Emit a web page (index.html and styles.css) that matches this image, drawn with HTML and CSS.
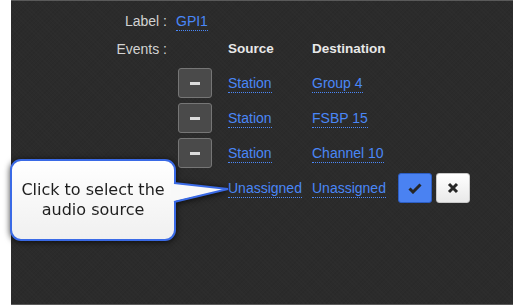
FILE: index.html
```html
<!DOCTYPE html>
<html>
<head>
<meta charset="utf-8">
<link rel="stylesheet" href="styles.css">
</head>
<body>
<div class="page">
  <div class="panel">
    <div class="form">
      <div class="lbl r1">Label :</div>
      <div class="val r1"><a class="link">GPI1</a></div>

      <div class="lbl r2">Events :</div>
      <div class="head src r2">Source</div>
      <div class="head dst r2">Destination</div>

      <div class="btncell"><button class="btn minus"><span class="bar"></span></button></div>
      <div class="cell"><a class="link">Station</a></div>
      <div class="cell"><a class="link">Group 4</a></div>
      <div class="cell"></div>

      <div class="btncell"><button class="btn minus"><span class="bar"></span></button></div>
      <div class="cell"><a class="link">Station</a></div>
      <div class="cell"><a class="link">FSBP 15</a></div>
      <div class="cell"></div>

      <div class="btncell"><button class="btn minus"><span class="bar"></span></button></div>
      <div class="cell"><a class="link">Station</a></div>
      <div class="cell"><a class="link">Channel 10</a></div>
      <div class="cell"></div>

      <div class="btncell"></div>
      <div class="cell"><a class="link">Unassigned</a></div>
      <div class="cell"><a class="link">Unassigned</a></div>
      <div class="cell actions">
        <button class="btn ok"><svg width="14" height="12" viewBox="0 0 14 12"><path d="M1.5 6.5 L5 10 L12.5 2.5" fill="none" stroke="#262626" stroke-width="3"/></svg></button>
        <button class="btn cancel"><svg width="12" height="12" viewBox="0 0 12 12"><path d="M2 2 L10 10 M10 2 L2 10" fill="none" stroke="#262626" stroke-width="3"/></svg></button>
      </div>
    </div>
  </div>
  <div class="callout">
    <div class="bubble">Click to select the audio source</div>
    <svg class="pointer" width="70" height="30" viewBox="0 0 70 30">
      <polygon points="6,5 63,11 6,24" fill="#f8f8f8"/>
      <polyline points="9,5 63,11 9,24" fill="none" stroke="#3a6ae6" stroke-width="2" stroke-linejoin="miter"/>
    </svg>
  </div>
</div>
</body>
</html>
```
FILE: styles.css
```css
html, body {
  margin: 0;
  padding: 0;
  background: #ffffff;
}
.page {
  position: relative;
  width: 513px;
  height: 305px;
  overflow: hidden;
}
.panel {
  margin-left: 11px;
  height: 303px;
  border-top: 1px solid #5a5a5a;
  border-bottom: 1px solid #5a5a5a;
  background-color: #2b2b2b;
  background-image: repeating-linear-gradient(45deg, rgba(255,255,255,0.012) 0 1px, transparent 1px 3px),
                    repeating-linear-gradient(-45deg, rgba(0,0,0,0.05) 0 1px, transparent 1px 3px);
  font-family: "Liberation Sans", Arial, sans-serif;
  font-size: 14px;
  color: #d0d0d0;
}
.form {
  display: grid;
  grid-template-columns: 156px 61px 84px 86px 1fr;
  grid-template-rows: 39px 28px 35px 35px 35px 35px;
}
.lbl {
  text-align: right;
  color: #d2d2d2;
}
.r1 { align-self: center; line-height: 18px; }
.r2 { line-height: 18px; align-self: start; }
.val {
  grid-column: 2 / 6;
  padding-left: 9px;
}
.lbl.r2 { grid-column: 1 / 3; padding-right: 61px; }
.head {
  font-weight: bold;
  font-size: 13.5px;
  color: #e8e8e8;
}
.head.src { grid-column: 3; }
.head.dst { grid-column: 4; }
.btncell {
  grid-column: 2;
  padding-left: 11px;
}
.cell {
  height: 30px;
  display: flex;
  align-items: center;
}
.link {
  color: #4a87f7;
  line-height: 16px;
  border-bottom: 1px dotted #4a87f7;
  padding-bottom: 1px;
  margin-top: 1px;
  white-space: nowrap;
}
.btn {
  box-sizing: border-box;
  width: 34px;
  height: 30px;
  padding: 0;
  margin: 0;
  border-radius: 3px;
  display: flex;
  align-items: center;
  justify-content: center;
}
.minus {
  background: #4a4a4a;
  border: 1px solid #767676;
}
.bar {
  display: block;
  width: 10px;
  height: 3px;
  background: #dcdcdc;
}
.actions {
  gap: 4px;
}
.ok {
  background: #4a82f2;
  border: 1px solid #2d5ec4;
}
.cancel {
  background: linear-gradient(#ffffff, #e9e9e9);
  border: 1px solid #c8c8c8;
}
.callout {
  position: absolute;
  left: 10px;
  top: 159px;
  width: 230px;
  height: 82px;
  filter: drop-shadow(0 1px 3px rgba(0,0,0,0.75));
}
.bubble {
  box-sizing: border-box;
  width: 166px;
  height: 82px;
  border: 2px solid #3a6ae6;
  border-radius: 11px;
  background: linear-gradient(#ffffff, #f0f0f0);
  font-family: "DejaVu Sans", Verdana, sans-serif;
  font-size: 16px;
  line-height: 20px;
  color: #1e1e1e;
  text-align: center;
  display: flex;
  align-items: center;
  justify-content: center;
  padding: 0 8px;
}
.pointer {
  position: absolute;
  left: 155px;
  top: 19px;
}
```
